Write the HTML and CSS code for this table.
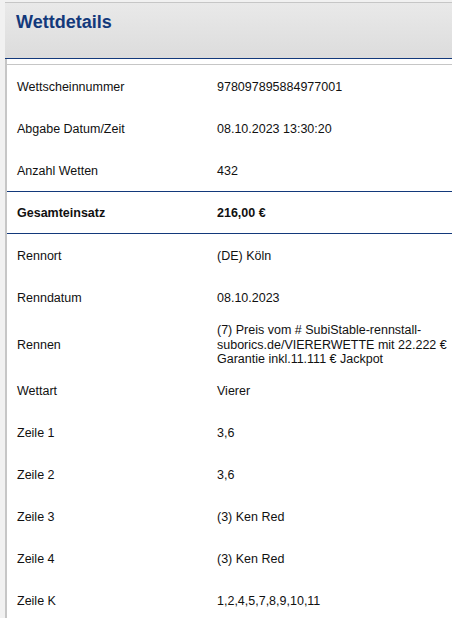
FILE: index.html
```html
<!DOCTYPE html>
<html lang="de">
<head>
    <meta charset="UTF-8">
    <meta name="viewport" content="width=device-width, initial-scale=1.0">
    <title>Wettdetails</title>
    <link rel="stylesheet" href="styles.css">
</head>
<body>
    <div class="panel">
        <div class="panel-header">
            <h1>Wettdetails</h1>
        </div>
        <div class="panel-body">
            <div class="details">
                <div class="row">
                    <span class="label">Wettscheinnummer</span>
                    <span class="value">978097895884977001</span>
                </div>
                <div class="row">
                    <span class="label">Abgabe Datum/Zeit</span>
                    <span class="value">08.10.2023 13:30:20</span>
                </div>
                <div class="row">
                    <span class="label">Anzahl Wetten</span>
                    <span class="value">432</span>
                </div>
                <div class="row row-total">
                    <span class="label">Gesamteinsatz</span>
                    <span class="value">216,00 €</span>
                </div>
                <div class="row">
                    <span class="label">Rennort</span>
                    <span class="value">(DE) Köln</span>
                </div>
                <div class="row">
                    <span class="label">Renndatum</span>
                    <span class="value">08.10.2023</span>
                </div>
                <div class="row">
                    <span class="label">Rennen</span>
                    <span class="value">(7) Preis vom # SubiStable-rennstall-suborics.de/VIERERWETTE mit 22.222 € Garantie inkl.11.111 € Jackpot</span>
                </div>
                <div class="row">
                    <span class="label">Wettart</span>
                    <span class="value">Vierer</span>
                </div>
                <div class="row">
                    <span class="label">Zeile 1</span>
                    <span class="value">3,6</span>
                </div>
                <div class="row">
                    <span class="label">Zeile 2</span>
                    <span class="value">3,6</span>
                </div>
                <div class="row">
                    <span class="label">Zeile 3</span>
                    <span class="value">(3) Ken Red</span>
                </div>
                <div class="row">
                    <span class="label">Zeile 4</span>
                    <span class="value">(3) Ken Red</span>
                </div>
                <div class="row">
                    <span class="label">Zeile K</span>
                    <span class="value">1,2,4,5,7,8,9,10,11</span>
                </div>
            </div>
        </div>
    </div>
</body>
</html>
```

FILE: styles.css
```css
:root {
    --navy: #13397b;
    --border-gray: #c6c6c6;
    --text-color: #111;
}

* {
    margin: 0;
    padding: 0;
    box-sizing: border-box;
}

body {
    background-color: #f1f1f1;
    font-family: 'Liberation Sans', Arial, sans-serif;
    color: var(--text-color);
    padding: 2px 0 0 5px;
    min-height: 100vh;
}

.panel {
    border-top: 1px solid var(--border-gray);
    background-color: white;
    min-height: 616px;
}

.panel-header {
    height: 56px;
    padding: 8px 11px 0;
    background: linear-gradient(to bottom, #e9e9e9 0%, #dcdcdc 100%);
    border-bottom: 1px solid var(--navy);
}

.panel-header h1 {
    font-size: 18px;
    line-height: 22px;
    font-weight: 700;
    color: var(--navy);
}

.panel-body {
    padding-top: 5px;
    border-left: 2px solid var(--border-gray);
}

.details {
    border-top: 1px solid var(--border-gray);
    margin-left: -2px;
    padding-left: 2px;
}

.row {
    display: grid;
    grid-template-columns: 200px 1fr;
    align-items: center;
    min-height: 42px;
    padding: 5px 0 3px 10px;
    font-size: 12.5px;
    line-height: 14.5px;
}

.row-total {
    font-weight: 700;
    border-top: 1px solid var(--navy);
    border-bottom: 1px solid var(--navy);
    min-height: 43px;
}
```
